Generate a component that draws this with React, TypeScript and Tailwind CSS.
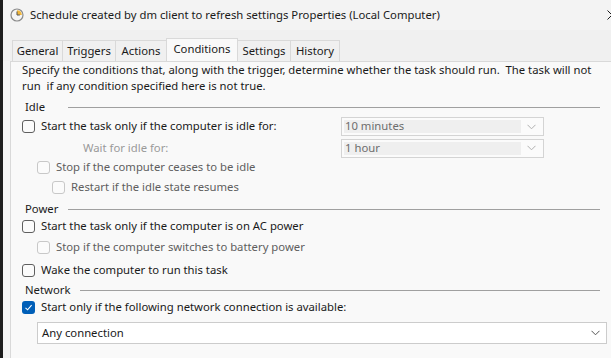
const font = { fontFamily: '"Noto Sans", "Segoe UI", sans-serif' };

const Checkbox = ({ checked = false, disabled = false }: { checked?: boolean; disabled?: boolean }) => {
  if (checked) {
    return (
      <span className="flex h-[13px] w-[13px] shrink-0 items-center justify-center rounded-[3px] bg-[#005fb8]">
        <svg width="9" height="9" viewBox="0 0 9 9" fill="none">
          <path d="M1.5 4.8 L3.6 6.8 L7.6 2.2" stroke="white" strokeWidth="1.1" />
        </svg>
      </span>
    );
  }
  return (
    <span
      className={
        disabled
          ? "h-[13px] w-[13px] shrink-0 rounded-[3px] border border-[#c8c8c8] bg-[#fbfbfb]"
          : "h-[13px] w-[13px] shrink-0 rounded-[3px] border border-[#5f5f5f] bg-[#fbfbfb]"
      }
    />
  );
};

const Chevron = ({ color }: { color: string }) => (
  <svg width="9" height="6" viewBox="0 0 9 6" fill="none">
    <path d="M0.5 0.8 L4.5 4.8 L8.5 0.8" stroke={color} strokeWidth="1" />
  </svg>
);

const DisabledSelect = ({ value }: { value: string }) => (
  <div className="flex h-[19px] w-[203px] items-center border border-[#d4d4d4] bg-[#fbfbfb] p-[2px]">
    <div className="flex h-full flex-1 items-center bg-[#efefef] pl-[1px] text-[11.3px] text-[#6d6d6d]">{value}</div>
    <div className="flex w-[20px] items-center justify-center">
      <Chevron color="#b0b0b0" />
    </div>
  </div>
);

const Section = ({ label, h }: { label: string; h: string }) => (
  <div className={`flex ${h} items-center pl-[3px] pr-[7px]`}>
    <span className="min-w-[33px] text-[11.3px] text-[#1a1a1a]">{label}</span>
    <div className="ml-[10px] h-px flex-1 bg-[#a0a0a0]" />
  </div>
);

const Row = ({
  label,
  indent = 0,
  disabled = false,
  checked = false,
  h,
}: {
  label: string;
  indent?: number;
  disabled?: boolean;
  checked?: boolean;
  h: string;
}) => (
  <div className={`flex ${h} items-center gap-[6px]`} style={{ paddingLeft: indent }}>
    <Checkbox disabled={disabled} checked={checked} />
    <span className={disabled ? "text-[11.3px] text-[#5e5e5e]" : "text-[11.3px] text-[#1a1a1a]"}>{label}</span>
  </div>
);

const tabs = [
  { t: "General", w: "w-[50px]" },
  { t: "Triggers", w: "w-[53px]" },
  { t: "Actions", w: "w-[51px]" },
];
const tabsRight = [
  { t: "Settings", w: "w-[53px]" },
  { t: "History", w: "w-[49px]" },
];

export default function App() {
  return (
    <div className="flex h-[358px] w-[611px] overflow-hidden bg-[#1c1c1c] pl-[3px]" style={font}>
      <div className="flex flex-1 flex-col bg-[#f3f3f3]">
        <div className="flex h-[30px] shrink-0 items-center pl-[7px]">
          <svg width="14" height="14" viewBox="0 0 14 14">
            <circle cx="7" cy="7" r="6" fill="#f4f4f4" stroke="#8a8a8a" strokeWidth="1.2" />
            <path d="M7 2.2 A4.8 4.8 0 0 1 11.8 7 L7 7 Z" fill="#f2b73a" />
            <path d="M7 3.5 L7 7 L9.8 7" stroke="#555" strokeWidth="1" fill="none" />
          </svg>
          <span className="ml-[6px] text-[11.3px] text-[#1a1a1a]">
            Schedule created by dm client to refresh settings Properties (Local Computer)
          </span>
          <svg className="ml-auto mr-[-6px]" width="10" height="10" viewBox="0 0 10 10">
            <path d="M0.5 0.5 L9.5 9.5 M9.5 0.5 L0.5 9.5" stroke="#1a1a1a" strokeWidth="1" />
          </svg>
        </div>
        <div className="flex h-[31px] shrink-0 items-end bg-[#f0f0f0] pl-[9px]">
          {tabs.map((x) => (
            <div
              key={x.t}
              className={`flex h-[21px] ${x.w} items-center justify-center border-l border-t border-[#d9d9d9] bg-[#f0f0f0] text-[11.3px] text-[#1a1a1a]`}
            >
              {x.t}
            </div>
          ))}
          <div className="mb-[-1px] flex h-[24px] w-[72px] items-center justify-center border-x border-t border-[#d9d9d9] bg-[#f9f9f9] pb-[2px] text-[11.3px] text-[#1a1a1a]">
            Conditions
          </div>
          {tabsRight.map((x) => (
            <div
              key={x.t}
              className={`flex h-[21px] ${x.w} items-center justify-center border-r border-t border-[#d9d9d9] bg-[#f0f0f0] text-[11.3px] text-[#1a1a1a]`}
            >
              {x.t}
            </div>
          ))}
        </div>
        <div className="ml-[7px] flex flex-1 flex-col border-l border-t border-[#d9d9d9] bg-[#f9f9f9] pl-[11px] pr-[4px]">
          <p className="text-[11.3px] leading-[16px] text-[#1a1a1a]">
            <span className="block">
              Specify the conditions that, along with the trigger, determine whether the task should run.&nbsp; The task will not
            </span>
            <span className="block">run&nbsp; if any condition specified here is not true.</span>
          </p>
          <div className="mt-[4px]">
            <Section label="Idle" h="h-[18px]" />
          </div>
          <div className="flex h-[21px] items-center pr-[63px]">
            <Row label="Start the task only if the computer is idle for:" h="h-[21px]" />
            <div className="ml-auto">
              <DisabledSelect value="10 minutes" />
            </div>
          </div>
          <div className="flex h-[22px] items-center pr-[63px]">
            <span className="pl-[61px] text-[11.3px] text-[#9a9a9a]">Wait for idle for:</span>
            <div className="ml-auto">
              <DisabledSelect value="1 hour" />
            </div>
          </div>
          <Row label="Stop if the computer ceases to be idle" indent={15} disabled h="h-[16px]" />
          <Row label="Restart if the idle state resumes" indent={30} disabled h="h-[25px]" />
          <Section label="Power" h="h-[18px]" />
          <Row label="Start the task only if the computer is on AC power" h="h-[17px]" />
          <Row label="Stop if the computer switches to battery power" indent={15} disabled h="h-[24px]" />
          <Row label="Wake the computer to run this task" h="h-[22px]" />
          <Section label="Network" h="h-[18px]" />
          <Row label="Start only if the following network connection is available:" checked h="h-[16px]" />
          <div className="ml-[15px] mt-[7px] flex h-[22px] items-center border border-[#cccccc] bg-white pl-[4px] pr-[6px]">
            <span className="text-[11.3px] text-[#1a1a1a]">Any connection</span>
            <div className="ml-auto">
              <Chevron color="#555555" />
            </div>
          </div>
        </div>
      </div>
    </div>
  );
}
